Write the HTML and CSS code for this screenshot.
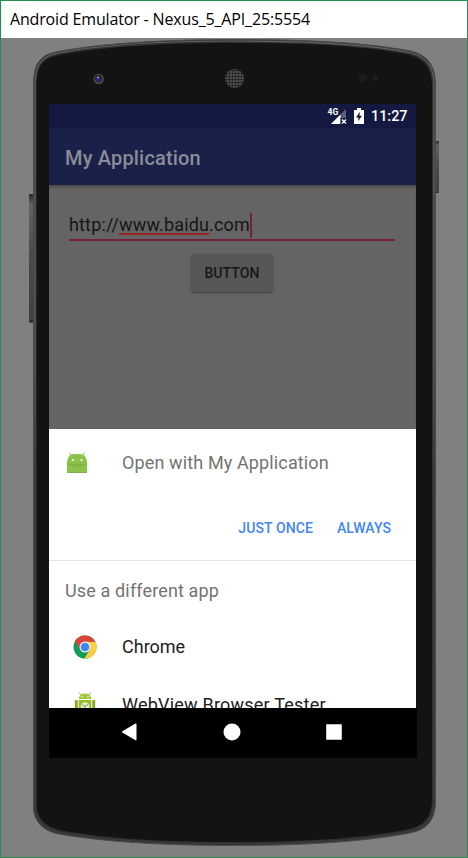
FILE: index.html
```html
<!DOCTYPE html>
<html lang="en">
<head>
<meta charset="utf-8">
<title>Android Emulator</title>
<link rel="stylesheet" href="styles.css">
</head>
<body>
<div class="window">
  <header class="titlebar"><span>Android Emulator - Nexus_5_API_25:5554</span></header>
  <main class="stage">
    <svg class="device" viewBox="1 38 466 819" aria-hidden="true">
      <defs>
        <linearGradient id="key" x1="0" y1="0" x2="0" y2="1">
          <stop offset="0" stop-color="#252525"/><stop offset=".08" stop-color="#626262"/>
          <stop offset=".5" stop-color="#4a4a4a"/><stop offset=".97" stop-color="#414141"/><stop offset="1" stop-color="#202020"/>
        </linearGradient>
        <linearGradient id="rim" x1="0" y1="0" x2="0" y2="1">
          <stop offset="0" stop-color="#606264"/><stop offset=".4" stop-color="#626268"/>
          <stop offset=".52" stop-color="#454546"/><stop offset="1" stop-color="#3c3c3c"/>
        </linearGradient>
        <pattern id="mesh" width="3" height="3" patternUnits="userSpaceOnUse">
          <rect width="3" height="3" fill="#505050"/><circle cx="1.5" cy="1.5" r="1.1" fill="#171717"/>
        </pattern>
        <path id="shell" d="M33.5 85C33.5 64 40 55 56 52C95 44 160 39.5 234 39.5C310 39.5 370 43 413 51.5C428 56 435.500 66 435.500 85V800C435.500 819 428 829 412 832.500C365 842 300 845.500 234 845.500C165 845.500 105 842 59 834C43 831 33.500 821 33.500 807Z"/>
      </defs>
      <rect x="29" y="194" width="5" height="128.500" rx="1" fill="url(#key)"/>
      <rect x="435" y="141" width="4" height="52" rx="1" fill="url(#key)"/>
      <use href="#shell" fill="#303031" stroke="#4a4a4b"/>
      <path d="M35 85C35 66 41 56.500 56 53.500C95 45.500 160 41 234 41C310 41 370 44.500 412 53C427 57.500 434 67 434 85V800C434 818 427 827.500 411 831C365 840.500 300 844 234 844C165 844 105 840.500 60 832.500C44 829.500 35 820 35 807Z" fill="none" stroke="url(#rim)" stroke-width="1.200"/>
      <path d="M36.500 86C36.500 68 42 58.500 57 55.500C96 47.500 160 43 234 43C310 43 370 46.500 410 55C425 59.500 432 69 432 86V799C432 816 425 825.500 409 829C365 838.500 300 842 234 842C165 842 105 838.500 62 830.500C46 827.500 37 818 37 806Z" fill="#131313"/>
      <circle cx="98.700" cy="79" r="5.200" fill="#494949"/>
      <circle cx="98.500" cy="78.500" r="3.700" fill="#25252b"/>
      <circle cx="98.300" cy="79.300" r="2" fill="#25259a"/>
      <circle cx="97.800" cy="77.500" r="1" fill="#a0a0bd"/>
      <circle cx="234.500" cy="78.500" r="9.500" fill="url(#mesh)"/>
      <circle cx="362.500" cy="78" r="4" fill="#1e1b1b"/>
      <circle cx="375.500" cy="78" r="2.700" fill="#201f1f"/>
    </svg>

    <section class="screen">
      <div class="status">
        <svg class="signal" viewBox="0 0 20 18">
          <path d="M18 2V17H3Z" fill="#5c5f7b"/><path d="M12.500 7.500V17H3Z" fill="#fff"/>
          <path d="M12.500 11H19V18H12.500Z" fill="#141941"/>
          <path d="M14 12.500l4 4m0-4l-4 4" stroke="#fff" stroke-width="1.400"/>
          <text x="-.5" y="8" class="network">4G</text>
        </svg>
        <svg class="battery" viewBox="0 0 10 16"><path d="M3 0H7V2H10V16H0V2H3Z" fill="#fff"/><path d="M5.800 3.800L2 9.400H4.500L4.100 13.200L8 7.800H5.500Z" fill="#141941"/></svg>
        <span class="clock">11:27</span>
      </div>
      <div class="toolbar">My Application</div>
      <div class="content">
        <div class="field"><span>http://<span class="misspelt">www.baidu</span>.com</span><i class="caret"></i></div>
        <div class="button">BUTTON</div>
      </div>
      <div class="sheet">
        <div class="choice first">
          <svg class="droid" viewBox="0 0 22 22">
            <path d="M1 11C1 5 4.500 2 8 2H14C17.500 2 21 5 21 11V20Q21 21 20 21H2Q1 21 1 20Z" fill="#8bc34a"/>
            <path d="M5.500 4L3.500 .8M16.500 4L18.500 .8" stroke="#9ac06c" stroke-linecap="round"/>
            <path d="M1 12.300H21" stroke="#76ad3d" stroke-width=".8"/><path d="M2 12.500H20L11 15.500Z" fill="#7eb542"/>
            <path d="M1 20.500H21" stroke="#7da752" stroke-width=".8"/>
            <circle cx="7" cy="8" r="1.100" fill="#fff"/><circle cx="15.500" cy="8" r="1.100" fill="#fff"/>
          </svg>
          <span>Open with My Application</span>
        </div>
        <div class="actions"><span class="once">JUST ONCE</span><span class="always">ALWAYS</span></div>
        <div class="heading">Use a different app</div>
        <div class="choice">
          <svg class="app" viewBox="0 0 24 24">
            <circle cx="12" cy="12" r="11.500" fill="#0f9d58"/>
            <path d="M12 6.500H22.200A11.500 11.500 0 0 1 11.400 23.500L16.800 14.800Z" fill="#ffcd40"/>
            <path d="M2 6.300A11.500 11.500 0 0 1 22.200 6.700H12L7.200 14.800Z" fill="#db4437"/>
            <circle cx="12" cy="12" r="5.500" fill="#f1f1f1"/><circle cx="12" cy="12" r="4.300" fill="#4285f4"/>
          </svg>
          <span>Chrome</span>
        </div>
        <div class="choice last">
          <svg class="app" viewBox="0 0 24 24">
            <path d="M7.500 2.500L6.500 .6M16.500 2.500L17.500 .6" stroke="#8ca842"/>
            <path d="M5.700 7C6 3.200 8.500 1.600 12 1.600S18 3.200 18.300 7Z" fill="#a4c93a"/>
            <path d="M5.700 8H18.300V21H5.700Z" fill="#94bd28"/>
            <rect x="1.800" y="8" width="3" height="10" rx="1" fill="#86ad25"/><rect x="19.200" y="8" width="3" height="10" rx="1" fill="#86ad25"/>
            <circle cx="9" cy="4.700" r=".7" fill="#fff"/><circle cx="15" cy="4.700" r=".7" fill="#fff"/>
            <circle cx="12" cy="14.500" r="4.300" fill="#e9eedb"/><path d="M9 12.500L12 14.300L15 12.500M12 14.300V18" fill="none" stroke="#829052"/>
          </svg>
          <span>WebView Browser Tester</span>
        </div>
      </div>
    </section>
    <nav class="nav">
      <svg viewBox="0 0 18 18"><path d="M1.300 8.200L14.500 .6Q15.500 .3 15.500 1.500V16.500Q15.500 17.700 14.500 17.200L1.300 9.600Q.5 9 1.300 8.200Z"/></svg>
      <svg viewBox="0 0 18 18"><circle cx="9" cy="9" r="8.500"/></svg>
      <svg viewBox="0 0 18 18"><rect x="1.200" y="1.200" width="15.600" height="15.600" rx=".6"/></svg>
    </nav>
  </main>
</div>
</body>
</html>
```

FILE: styles.css
```css
* { box-sizing: border-box; }
body { margin: 0; font-family: Roboto, "Liberation Sans", sans-serif; }
.window { width: 468px; height: 858px; border: 1px solid #209050; background: #808080; overflow: hidden; }
.titlebar { height: 37px; padding-left: 9px; background: #fff; color: #000; font: 16px/37px "Open Sans", "Noto Sans", sans-serif; letter-spacing: -.16px; white-space: nowrap; }
.stage { position: relative; height: 819px; padding: 66px 0 0 48px; }
.device { position: absolute; inset: 0; width: 466px; height: 819px; }
.screen { position: relative; width: 367px; height: 604px; overflow: hidden; background: #646464; }
.status { height: 24px; display: flex; align-items: center; background: #141941; padding-left: 279px; color: #fff; }
.signal { width: 20px; height: 18px; flex: none; overflow: visible; }
.network { font: 700 8.500px Roboto, sans-serif; fill: #fff; }
.battery { width: 10px; height: 16px; margin-left: 6px; flex: none; }
.clock { margin-left: 7px; padding-top: 2px; font-size: 14.400px; font-weight: 500; line-height: 24px; }
.toolbar { height: 57px; padding-left: 16px; line-height: 60px; font-size: 20px; font-weight: 500; letter-spacing: .17px; color: #8a8c98; background: #1a2149; }
.content { height: 244px; padding: 26px 21px 0 20px; box-shadow: inset 0 3px 3px -1px #484848; background: #646464; }
.field { height: 30px; display: flex; align-items: center; border-bottom: 2px solid #73203c; color: #161616; font-size: 18px; line-height: 28px; letter-spacing: .15px; }
.misspelt { background: linear-gradient(#96251f, #96251f) 0 100% / 100% 2px no-repeat; }
.caret { width: 2px; height: 25px; background: #73203c; }
.button { width: 82px; height: 38px; margin: 13px 0 0 122px; border-radius: 2px; background: #565656; box-shadow: 0 1px 2px #424242; color: #161616; font-size: 14px; font-weight: 500; letter-spacing: .1px; line-height: 38px; text-align: center; }
.sheet { background: #fff; }
.choice { height: 57px; display: flex; align-items: center; padding-left: 24px; color: #212121; font-size: 18px; }
.choice span { margin-left: 25px; white-space: nowrap; }
.choice.first { height: 67px; padding-left: 17px; color: #737373; letter-spacing: .13px; }
.choice.first span { margin-left: 34px; }
.choice.last { letter-spacing: .22px; }
.choice.last span { padding-top: 2px; }
.droid { width: 22px; height: 22px; }
.app { width: 24px; height: 24px; }
.actions { height: 65px; display: flex; justify-content: flex-end; gap: 24px; padding-right: 25px; border-bottom: 1px solid #e3e3e3; color: #4285f4; font-size: 14px; font-weight: 500; letter-spacing: .1px; line-height: 64px; }
.heading { height: 57px; padding-left: 16px; color: #737373; font-size: 18px; letter-spacing: .14px; line-height: 59px; }
.nav { position: relative; width: 368px; height: 50px; display: flex; align-items: center; gap: 84px; padding: 0 0 2px 72px; background: #000; }
.nav svg { width: 18px; height: 18px; fill: #fff; }
```
